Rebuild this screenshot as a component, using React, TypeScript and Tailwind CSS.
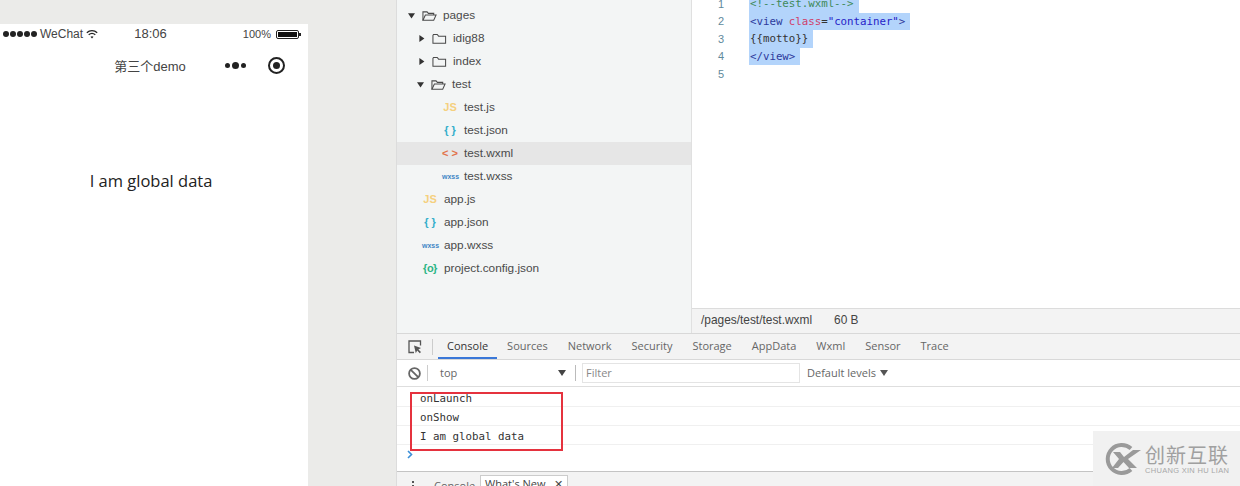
import React from "react";

const Sans = "font-['Liberation_Sans','Noto_Sans_CJK_SC',sans-serif]";

function FolderClosed() {
  return (
    <svg width="15" height="12" viewBox="0 0 16 12" fill="none" stroke="#4a4a4a" strokeWidth="1.1" className="shrink-0">
      <path d="M1 2.2 V10.5 H14.5 V3 H7 L5.6 1.2 H1.6 Z" />
    </svg>
  );
}

function FolderOpen() {
  return (
    <svg width="15" height="12" viewBox="0 0 16 12" fill="none" stroke="#4a4a4a" strokeWidth="1.1" className="shrink-0">
      <path d="M1 10.5 V1.6 H5.4 L6.8 3.2 H12.5 V5" />
      <path d="M1 10.5 H12.5 L15 5 H3.6 L1 10.5 Z" />
    </svg>
  );
}

function Caret({ open }: { open: boolean }) {
  return (
    <svg width="7" height="7" viewBox="0 0 7 7" className="shrink-0" fill="#333">
      {open ? <path d="M0 1.2 H7 L3.5 6.4 Z" /> : <path d="M1.4 0 L6.4 3.5 L1.4 7 Z" />}
    </svg>
  );
}

function FileIcon({ kind }: { kind: string }) {
  if (kind === "js")
    return <span className="w-[16px] text-center text-[11px] font-bold leading-none text-[#f5d07e]">JS</span>;
  if (kind === "json")
    return <span className="w-[16px] text-center text-[11px] font-bold leading-none text-[#35aecb]">{"{ }"}</span>;
  if (kind === "wxml")
    return <span className="w-[16px] text-center text-[11px] font-bold leading-none text-[#e2734a]">{"< >"}</span>;
  if (kind === "wxss")
    return <span className="w-[16px] text-center text-[7px] font-bold leading-none text-[#3f86c6]">wxss</span>;
  return <span className="w-[16px] text-center text-[11px] font-bold leading-none tracking-[-0.5px] text-[#2bb586]">{"{o}"}</span>;
}

function FolderRow({ name, open, indent }: { name: string; open: boolean; indent: string }) {
  return (
    <div className={`flex h-[23px] items-center ${indent}`}>
      <Caret open={open} />
      <span className="ml-[7px] flex">{open ? <FolderOpen /> : <FolderClosed />}</span>
      <span className="ml-[6px]">{name}</span>
    </div>
  );
}

function FileRow({ name, kind, nested, selected }: { name: string; kind: string; nested?: boolean; selected?: boolean }) {
  return (
    <div className={`flex h-[23px] items-center ${nested ? "pl-[45px]" : "pl-[25px]"} ${selected ? "bg-[#e6e6e6]" : ""}`}>
      <FileIcon kind={kind} />
      <span className="ml-[6px]">{name}</span>
    </div>
  );
}

function FileTree() {
  return (
    <div className={`w-[295px] shrink-0 border-r border-[#e0e0e0] bg-[#f3f5f5] pt-[4px] text-[11.8px] text-[#4a4a4a] ${Sans}`}>
      <FolderRow name="pages" open indent="pl-[11px]" />
      <FolderRow name="idig88" open={false} indent="pl-[21px]" />
      <FolderRow name="index" open={false} indent="pl-[21px]" />
      <FolderRow name="test" open indent="pl-[20px]" />
      <FileRow name="test.js" kind="js" nested />
      <FileRow name="test.json" kind="json" nested />
      <FileRow name="test.wxml" kind="wxml" nested selected />
      <FileRow name="test.wxss" kind="wxss" nested />
      <FileRow name="app.js" kind="js" />
      <FileRow name="app.json" kind="json" />
      <FileRow name="app.wxss" kind="wxss" />
      <FileRow name="project.config.json" kind="cfg" />
    </div>
  );
}

function CodeLine({ n, children }: { n: number; children?: React.ReactNode }) {
  return (
    <div className="flex h-[17.5px] items-center">
      <span className={`w-[32px] text-right text-[11px] text-[#5f8a9c] ${Sans}`}>{n}</span>
      <span className="ml-[25px] bg-[#b3d4fb] pl-[1px] pr-[5px] leading-[17.5px] empty:bg-transparent">{children}</span>
    </div>
  );
}

function Editor() {
  return (
    <div className="flex min-w-0 flex-1 flex-col bg-white">
      <div className="-mt-[5px] flex-1 font-['DejaVu_Sans_Mono',monospace] text-[10.8px] tracking-[-0.03px]">
        <CodeLine n={1}>
          <span className="text-[#3f8a5a]">{"<!--test.wxml-->"}</span>
        </CodeLine>
        <CodeLine n={2}>
          <span className="text-[#2d3a9c]">{"<view "}</span>
          <span className="text-[#d0406a]">class</span>
          <span className="text-[#333]">=</span>
          <span className="text-[#2622c8]">"container"</span>
          <span className="text-[#2d3a9c]">{">"}</span>
        </CodeLine>
        <CodeLine n={3}>
          <span className="text-[#333]">{"{{motto}}"}</span>
        </CodeLine>
        <CodeLine n={4}>
          <span className="text-[#2d3a9c]">{"</view>"}</span>
        </CodeLine>
        <CodeLine n={5} />
      </div>
      <div className={`flex h-[25px] items-center gap-[22px] border-t border-[#dcdcdc] bg-[#f3f3f3] pl-[9px] text-[11.9px] text-[#444] ${Sans}`}>
        <span>/pages/test/test.wxml</span>
        <span>60 B</span>
      </div>
    </div>
  );
}

function InspectIcon() {
  return (
    <svg width="14" height="14" viewBox="0 0 14 14" fill="none" className="shrink-0">
      <path d="M6 12.5 H1 V1 H12.5 V5.5" stroke="#555" strokeWidth="1.3" />
      <path d="M6 5.5 L7.8 13.2 L9.2 10.6 L11.8 13.2 L13 12 L10.4 9.4 L13 8 Z" fill="#555" />
    </svg>
  );
}

function BlockIcon() {
  return (
    <svg width="13" height="13" viewBox="0 0 13 13" fill="none" stroke="#666" strokeWidth="1.8" className="shrink-0">
      <circle cx="6.5" cy="6.5" r="5.4" />
      <path d="M2.8 2.8 L10.2 10.2" />
    </svg>
  );
}

const tabs = ["Sources", "Network", "Security", "Storage", "AppData", "Wxml", "Sensor", "Trace"];

function DevTools() {
  return (
    <div className="flex min-h-0 flex-1 flex-col bg-white font-['Open_Sans',sans-serif] text-[11px] text-[#5a5a5a]">
      <div className="flex h-[27px] shrink-0 items-stretch border-y border-[#d8d8d8] bg-[#f3f3f3]">
        <div className="flex items-center pl-[11px]">
          <InspectIcon />
          <span className="ml-[10px] h-[16px] w-px bg-[#ccc]" />
        </div>
        <div className="ml-[5px] flex items-center border-b-2 border-[#3b78d8] px-[9px] pt-[2px] text-[#333]">Console</div>
        <div className="ml-[10px] flex items-stretch gap-[20px]">
          {tabs.map((x) => (
            <div key={x} className="flex items-center text-[#666]">
              {x}
            </div>
          ))}
        </div>
      </div>
      <div className="flex h-[27px] shrink-0 items-center border-b border-[#dedede] pl-[11px]">
        <BlockIcon />
        <span className="ml-[6px] h-[16px] w-px bg-[#ccc]" />
        <span className="ml-[12px] w-[118px] text-[#666]">top</span>
        <span className="h-0 w-0 border-x-[4px] border-t-[6px] border-x-transparent border-t-[#444]" />
        <span className="ml-[9px] h-[16px] w-px bg-[#bbb]" />
        <div className="ml-[6px] flex h-[20px] w-[218px] items-center border border-[#e4e4e4] pl-[3px] text-[#888]">Filter</div>
        <span className="ml-[7px] text-[#666]">Default levels</span>
        <span className="ml-[4px] h-0 w-0 border-x-[4px] border-t-[6px] border-x-transparent border-t-[#555]" />
      </div>
      <div className="relative shrink-0 font-['DejaVu_Sans_Mono',monospace] text-[10.8px] text-[#333]">
        <div className="flex h-[20px] items-center border-b border-[#f0f0f0] pl-[23px] pt-[6px]">onLaunch</div>
        <div className="flex h-[19px] items-center border-b border-[#f0f0f0] pl-[23px] pt-[5px]">onShow</div>
        <div className="flex h-[19px] items-center border-b border-[#f0f0f0] pl-[23px] pt-[5px]">I am global data</div>
        <div className="absolute left-[13px] top-[5px] h-[59px] w-[153px] border-2 border-[#e5323e]" />
      </div>
      <div className="flex h-[26px] shrink-0 items-start pl-[10px] pt-[5px]">
        <svg width="6" height="9" viewBox="0 0 6 9" fill="none" stroke="#3b8fd8" strokeWidth="1.6">
          <path d="M1 1 L4.5 4.5 L1 8" />
        </svg>
      </div>
      <div className="flex flex-1 items-start border-t border-[#c4c4c4] bg-[#f3f3f3] pl-[15px] pt-[3px]">
        <span className="flex flex-col gap-[2px] pt-[6px]">
          <span className="h-[2px] w-[2px] bg-[#555]" />
          <span className="h-[2px] w-[2px] bg-[#555]" />
        </span>
        <span className="ml-[20px] mt-[3px] text-[#666]">Console</span>
        <span className="ml-[5px] flex h-[20px] items-start gap-[8px] border border-b-0 border-[#ccc] bg-white px-[4px] text-[#444]">
          What's New <span>✕</span>
        </span>
      </div>
    </div>
  );
}

function Phone() {
  return (
    <div className="mt-[24px] flex w-[308px] shrink-0 flex-col bg-white text-[#333]">
      <div className={`flex h-[20px] items-center justify-between pl-[3px] pr-[7px] text-[12px] text-[#444] ${Sans}`}>
        <div className="flex items-center gap-[3px]">
          <span className="flex gap-[1px]">
            {[0, 1, 2, 3, 4].map((i) => (
              <span key={i} className="h-[6px] w-[6px] rounded-full bg-[#222]" />
            ))}
          </span>
          <span>WeChat</span>
          <svg width="12" height="9" viewBox="0 0 12 9" fill="none" stroke="#222" strokeWidth="1.3">
            <path d="M0.8 2.8 C3.8 0 8.2 0 11.2 2.8" />
            <path d="M2.7 4.8 C4.7 3.1 7.3 3.1 9.3 4.8" />
            <path d="M6 8.6 L4.5 6.8 C5.4 6.1 6.6 6.1 7.5 6.8 Z" fill="#222" stroke="none" />
          </svg>
        </div>
        <span className="-ml-[40px] text-[13px]">18:06</span>
        <div className="flex items-center gap-[5px]">
          <span className="text-[11px]">100%</span>
          <span className="flex items-center">
            <span className="flex h-[9px] w-[23px] items-center rounded-[2px] border border-[#222] p-[1px]">
              <span className="h-full w-full bg-[#111]" />
            </span>
            <span className="h-[3px] w-[2px] bg-[#222]" />
          </span>
        </div>
      </div>
      <div className="relative flex h-[43px] items-center justify-center pr-[8px]">
        <span className={`mt-[3px] text-[13px] text-[#444] ${Sans}`}>第三个demo</span>
        <div className="absolute right-[23px] top-[13px] flex items-center gap-[22px]">
          <span className="flex items-center gap-[2px]">
            <span className="h-[5px] w-[5px] rounded-full bg-[#222]" />
            <span className="h-[7px] w-[7px] rounded-full bg-[#222]" />
            <span className="h-[5px] w-[5px] rounded-full bg-[#222]" />
          </span>
          <span className="flex h-[17px] w-[17px] items-center justify-center rounded-full border-2 border-[#222]">
            <span className="h-[7px] w-[7px] rounded-full bg-[#222]" />
          </span>
        </div>
      </div>
      <div className="mt-[83px] pr-[6px] text-center font-['Open_Sans',sans-serif] text-[16.5px] leading-[22px] text-[#222]">I am global data</div>
    </div>
  );
}

function Watermark() {
  return (
    <div className="absolute bottom-0 right-0 flex h-[55px] w-[147px] items-center bg-[#f1f1f1] pl-[11px]">
      <svg width="38" height="34" viewBox="0 0 38 34" fill="none" className="shrink-0">
        <path d="M27 6.5 A14 14 0 1 0 27 27.5" stroke="#9a9a9a" strokeWidth="4" />
        <path d="M9 10 H16 L20 15 L29 8 H37 L24 17 L33 26 H25 L19.5 20 L14 26 H8 L15 17 Z" fill="#9a9a9a" />
      </svg>
      <div className="ml-[3px] flex flex-col items-start">
        <span className="font-['Noto_Sans_CJK_SC',sans-serif] text-[20px] leading-[24px] tracking-[1px] text-[#a0a0a0]">创新互联</span>
        <span className="whitespace-nowrap font-['Liberation_Sans',sans-serif] text-[7.5px] leading-[8px] tracking-[0.3px] text-[#a8a8a8]">CHUANG XIN HU LIAN</span>
      </div>
    </div>
  );
}

export default function App() {
  return (
    <div className="relative flex h-[486px] w-[1240px] overflow-hidden bg-[#ebebe9]">
      <Phone />
      <div className="ml-[88px] flex min-w-0 flex-1 flex-col border-l border-[#dcdcdc]">
        <div className="flex h-[333px] shrink-0 overflow-hidden">
          <FileTree />
          <Editor />
        </div>
        <DevTools />
      </div>
      <Watermark />
    </div>
  );
}
